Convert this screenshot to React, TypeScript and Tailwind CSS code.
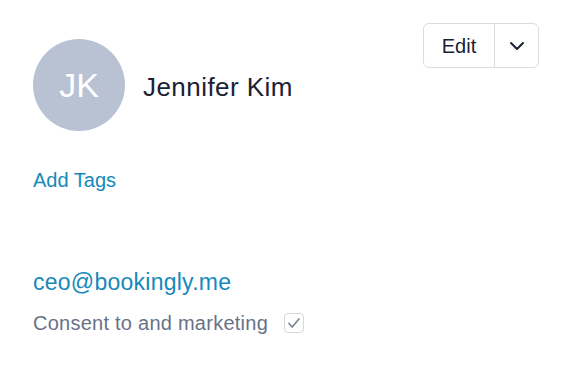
import React from "react";

export default function App() {
  return (
    <div
      className="w-[562px] h-[370px] bg-white overflow-hidden pl-[33px] pr-[23px] pt-[23px]"
      style={{ fontFamily: '"Liberation Sans", Arial, sans-serif' }}
    >
      <div className="flex justify-between items-start">
        <div className="flex items-center gap-[18px] mt-[16px]">
          <div className="w-[92px] h-[92px] rounded-full bg-[#b8c2d3] flex items-center justify-center text-white text-[34px] leading-none">
            JK
          </div>
          <div className="text-[26px] leading-none tracking-[0.45px] text-[#1b2134] mt-[4px]">Jennifer Kim</div>
        </div>
        <div className="flex h-[45px] border border-[#d8dce3] rounded-[6px]">
          <div className="w-[71px] flex items-center justify-center text-[20px] text-[#1b2134] border-r border-[#d8dce3]">
            Edit
          </div>
          <div className="w-[43px] flex items-center justify-center">
            <svg width="16" height="10" viewBox="0 0 16 10" fill="none">
              <path d="M2 2l6 6 6-6" stroke="#1b2134" strokeWidth="2" strokeLinecap="round" strokeLinejoin="round" />
            </svg>
          </div>
        </div>
      </div>
      <div className="mt-[39px] text-[20px] leading-none text-[#1689bb]">Add Tags</div>
      <div className="mt-[81px] text-[23px] leading-none tracking-[0.25px] text-[#1689bb]">ceo@bookingly.me</div>
      <div className="mt-[19px] flex items-center gap-[16px]">
        <span className="text-[20px] leading-none tracking-[0.25px] text-[#687287]">Consent to and marketing</span>
        <div className="w-[20px] h-[20px] rounded-[4px] border border-[#d3d7de] flex items-center justify-center">
          <svg width="14" height="12" viewBox="0 0 14 12" fill="none">
            <path d="M2 6.5l3.2 3.5L12 2" stroke="#7d8594" strokeWidth="1.7" strokeLinecap="round" strokeLinejoin="round" />
          </svg>
        </div>
      </div>
    </div>
  );
}
